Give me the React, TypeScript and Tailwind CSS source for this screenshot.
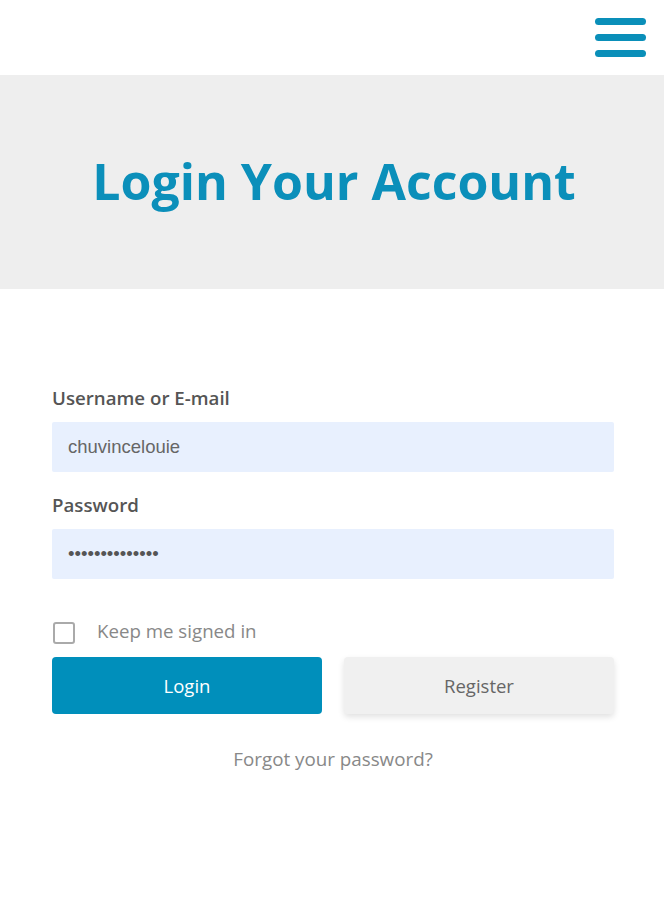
import React from "react";

export default function App() {
  return (
    <div className="w-[664px] h-[900px] bg-white" style={{ fontFamily: '"Open Sans", sans-serif' }}>
      <header className="h-[75px] flex items-start justify-end pr-[18px] pt-[18px]">
        <div className="flex flex-col gap-[9px] w-[51px]">
          <div className="h-[7px] rounded-full bg-[#0a8fb9]" />
          <div className="h-[7px] rounded-full bg-[#0a8fb9]" />
          <div className="h-[7px] rounded-full bg-[#0a8fb9]" />
        </div>
      </header>
      <section className="h-[214px] bg-[#eeeeee] flex items-center justify-center">
        <h1 className="text-[50px] font-bold text-[#0b8fba] leading-none pb-[2px] pl-[4px]">Login Your Account</h1>
      </section>
      <form className="pl-[52px] pr-[50px] pt-[100px] flex flex-col">
        <label className="h-[19px] text-[18.7px] font-semibold text-[#555] leading-none">Username or E-mail</label>
        <div className="mt-[14px] h-[50px] rounded-[2px] bg-[#e8f0fe] flex items-center px-[16px] text-[18.5px] text-[#666]" style={{ fontFamily: '"Liberation Sans", Arial, sans-serif' }}>
          chuvincelouie
        </div>
        <label className="mt-[24px] h-[19px] text-[18.7px] font-semibold text-[#555] leading-none">Password</label>
        <div className="mt-[14px] h-[50px] rounded-[2px] bg-[#e8f0fe] flex items-center px-[16px] text-[18.5px] text-[#555]" style={{ fontFamily: '"Liberation Sans", Arial, sans-serif' }}>
          ••••••••••••••
        </div>
        <div className="mt-[43px] h-[22px] flex items-center">
          <div className="ml-[1px] w-[22px] h-[22px] rounded-[3px] border-2 border-[#aaaaaa] bg-white" />
          <span className="ml-[22px] text-[18.7px] leading-none text-[#888] -mt-[3px]">Keep me signed in</span>
        </div>
        <div className="mt-[13px] flex gap-[22px]">
          <button type="button" className="w-[270px] h-[57px] rounded-[4px] bg-[#008fbb] text-white text-[18.5px]">Login</button>
          <button type="button" className="w-[270px] h-[57px] rounded-[4px] bg-[#f0f0f0] text-[#666] text-[18.5px] shadow-[0_3px_6px_rgba(0,0,0,0.12)]">Register</button>
        </div>
        <div className="mt-[36px] h-[19px] leading-none text-center text-[18.8px] text-[#888]">Forgot your password?</div>
      </form>
    </div>
  );
}
